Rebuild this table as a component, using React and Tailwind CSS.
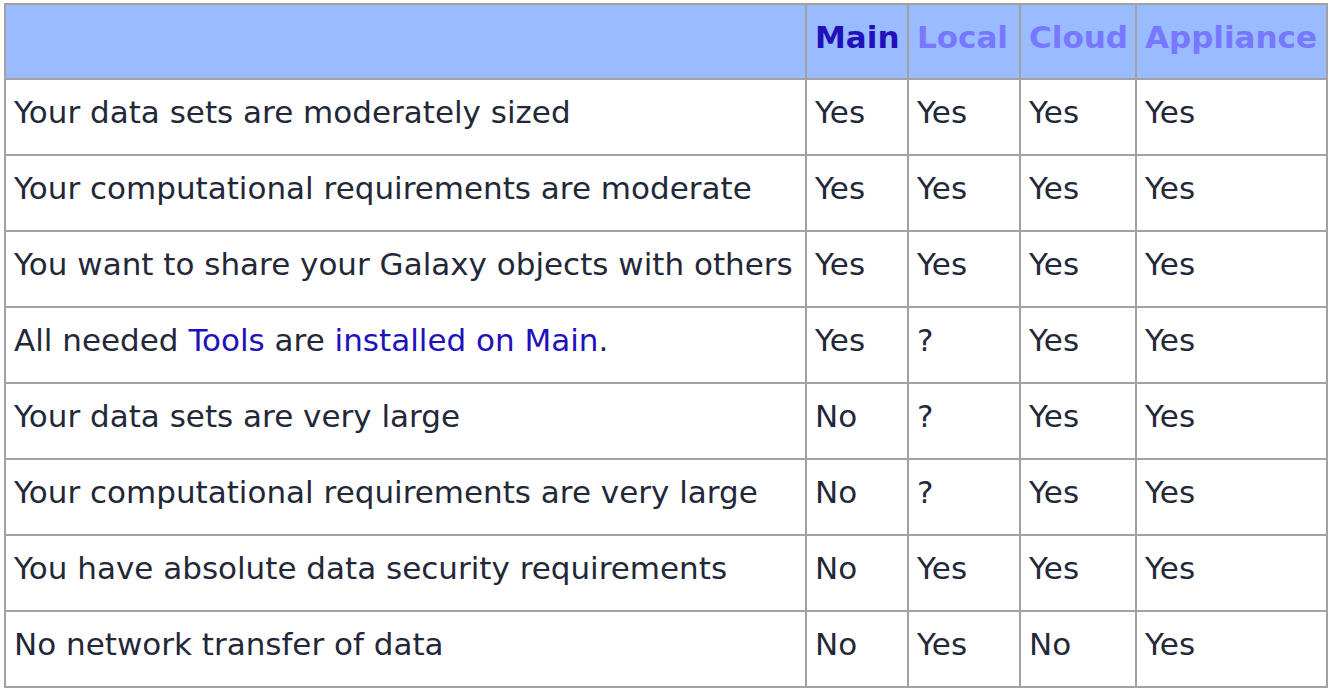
import React from "react";

const rows = [
  ["Your data sets are moderately sized", "Yes", "Yes", "Yes", "Yes"],
  ["Your computational requirements are moderate", "Yes", "Yes", "Yes", "Yes"],
  ["You want to share your Galaxy objects with others", "Yes", "Yes", "Yes", "Yes"],
  ["__tools__", "Yes", "?", "Yes", "Yes"],
  ["Your data sets are very large", "No", "?", "Yes", "Yes"],
  ["Your computational requirements are very large", "No", "?", "Yes", "Yes"],
  ["You have absolute data security requirements", "No", "Yes", "Yes", "Yes"],
  ["No network transfer of data", "No", "Yes", "No", "Yes"],
];

const base = "border-l-2 border-t-2 border-[#a2a2a2] pl-[8px] pt-[14px] whitespace-nowrap overflow-hidden";
const cell = `${base} h-[76px]`;
const head = `${base} h-[75px] bg-[#99bbff] font-bold`;

export default function App() {
  return (
    <div
      className="w-[1332px] h-[690px] bg-white overflow-hidden pt-[3px] pl-[4px] text-[31px] leading-[36px] text-[#232839]"
      style={{ fontFamily: '"DejaVu Sans", sans-serif' }}
    >
      <div className="grid grid-cols-[801px_102px_112px_116px_191px] w-[1324px] border-r-2 border-b-2 border-[#a2a2a2]">
        <div className={head}></div>
        <div className={`${head} text-[#2211bb]`}>Main</div>
        <div className={`${head} text-[#7777ff]`}>Local</div>
        <div className={`${head} text-[#7777ff]`}>Cloud</div>
        <div className={`${head} text-[#7777ff]`}>Appliance</div>
        {rows.map((r, i) => (
          <React.Fragment key={i}>
            <div className={cell}>
              {r[0] === "__tools__" ? (
                <>
                  All needed <span className="text-[#2211bb]">Tools</span> are{" "}
                  <span className="text-[#2211bb]">installed on Main</span>.
                </>
              ) : (
                r[0]
              )}
            </div>
            <div className={cell}>{r[1]}</div>
            <div className={cell}>{r[2]}</div>
            <div className={cell}>{r[3]}</div>
            <div className={cell}>{r[4]}</div>
          </React.Fragment>
        ))}
      </div>
    </div>
  );
}
